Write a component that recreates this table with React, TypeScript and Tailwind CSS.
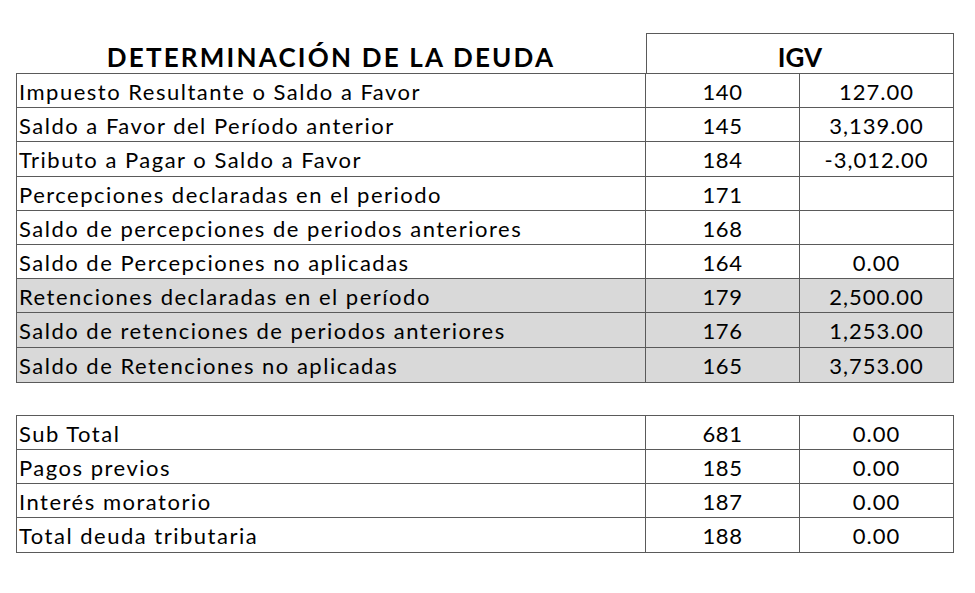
import React from "react";

type Row = { label: string; code: string; value: string; shaded?: boolean };

const rows1: Row[] = [
  { label: "Impuesto Resultante o Saldo a Favor", code: "140", value: "127.00" },
  { label: "Saldo a Favor del Período anterior", code: "145", value: "3,139.00" },
  { label: "Tributo a Pagar o Saldo a Favor", code: "184", value: "-3,012.00" },
  { label: "Percepciones declaradas en el periodo", code: "171", value: "" },
  { label: "Saldo de percepciones de periodos anteriores", code: "168", value: "" },
  { label: "Saldo de Percepciones no aplicadas", code: "164", value: "0.00" },
  { label: "Retenciones declaradas en el período", code: "179", value: "2,500.00", shaded: true },
  { label: "Saldo de retenciones de periodos anteriores", code: "176", value: "1,253.00", shaded: true },
  { label: "Saldo de Retenciones no aplicadas", code: "165", value: "3,753.00", shaded: true },
];

const rows2: Row[] = [
  { label: "Sub Total", code: "681", value: "0.00" },
  { label: "Pagos previos", code: "185", value: "0.00" },
  { label: "Interés moratorio", code: "187", value: "0.00" },
  { label: "Total deuda tributaria", code: "188", value: "0.00" },
];

function TableRow({ r, last }: { r: Row; last: boolean }) {
  return (
    <div
      className={
        "grid grid-cols-[629px_154px_153px] h-[34.2px] " +
        (last ? "" : "border-b border-[#5a5a5a] ") +
        (r.shaded ? "bg-[#d9d9d9]" : "bg-white")
      }
    >
      <div className="flex items-center pl-[2px] pt-[1px] border-r border-[#5a5a5a] whitespace-nowrap tracking-[1.5px]">
        {r.label}
      </div>
      <div className="flex items-center justify-center pt-[1px] border-r border-[#5a5a5a] tracking-[0.5px]">
        {r.code}
      </div>
      <div className="flex items-center justify-center pt-[1px] tracking-[1px]">{r.value}</div>
    </div>
  );
}

export default function App() {
  return (
    <div
      className="w-[975px] h-[593px] bg-white text-black pt-[33px] pl-[16px] text-[22px]"
      style={{ fontFamily: "Lato, 'Open Sans', sans-serif" }}
    >
      <div className="flex w-[938px]">
        <div className="w-[630px] h-[40px] flex items-end justify-center pb-[3px] font-bold text-[26px] leading-none tracking-[2.2px]">
          DETERMINACIÓN DE LA DEUDA
        </div>
        <div className="w-[308px] h-[40px] border-t border-l border-r border-[#5a5a5a] flex items-end justify-center pb-[3px] font-bold text-[26px] leading-none">
          IGV
        </div>
      </div>
      <div className="w-[938px] border border-[#5a5a5a]">
        {rows1.map((r, i) => (
          <TableRow key={r.code} r={r} last={i === rows1.length - 1} />
        ))}
      </div>
      <div className="h-[32px]" />
      <div className="w-[938px] border border-[#5a5a5a]">
        {rows2.map((r, i) => (
          <TableRow key={r.code} r={r} last={i === rows2.length - 1} />
        ))}
      </div>
    </div>
  );
}
